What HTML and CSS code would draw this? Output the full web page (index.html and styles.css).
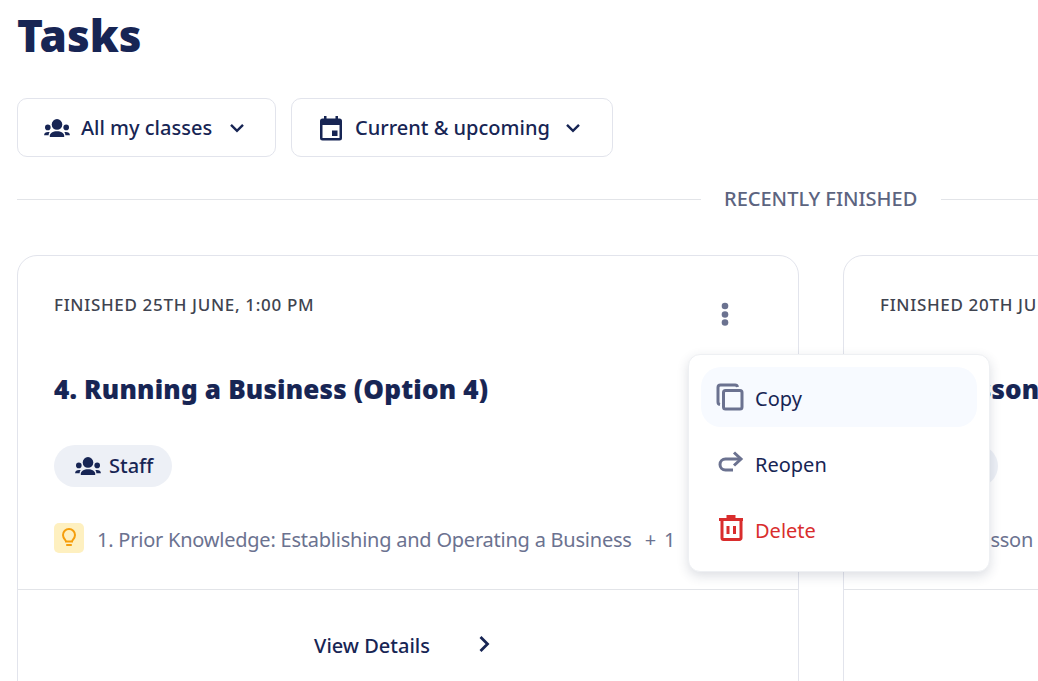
FILE: index.html
```html
<!DOCTYPE html>
<html lang="en">
<head>
<meta charset="utf-8">
<title>Tasks</title>
<link rel="stylesheet" href="styles.css">
</head>
<body>
<svg class="defs" width="0" height="0" aria-hidden="true">
  <symbol id="people" viewBox="0 0 26 18">
    <circle cx="13" cy="5.400" r="5.300"/>
    <circle cx="3.800" cy="8.400" r="2.800"/>
    <circle cx="22.200" cy="8.400" r="2.800"/>
    <path d="M5.800 18v-1.300c0-2.700 3.200-4.500 7.200-4.500s7.200 1.800 7.200 4.500V18z"/>
    <path d="M0.100 16.200c0-2 1.700-3.200 4-3.200.6 0 1.100.1 1.600.3-.7.700-1.100 1.700-1.100 2.900z"/>
    <path d="M25.900 16.200c0-2-1.700-3.200-4-3.200-.6 0-1.100.1-1.600.3.700.7 1.100 1.700 1.100 2.900z"/>
  </symbol>
</svg>
<main class="page">
  <h1 class="title">Tasks</h1>
  <div class="filters">
    <button class="filter filter-classes">
      <svg class="icon-people" width="26" height="18"><use href="#people"/></svg>
      <span>All my classes</span>
      <svg class="chev" width="16" height="10" viewBox="0 0 16 10"><path d="M2 1.800l6 6 6-6"/></svg>
    </button>
    <button class="filter filter-dates">
      <svg class="icon-cal" width="24" height="26" viewBox="0 0 24 26"><path d="M5 1h2.500v2.500h9V1H19v2.500h1.500A2.500 2.500 0 0 1 23 6v17a2.500 2.500 0 0 1-2.500 2.500h-17A2.500 2.500 0 0 1 1 23V6a2.500 2.500 0 0 1 2.500-2.500H5zM3.500 10v13h17V10zM13 15.500h5.500V21H13z" fill-rule="evenodd"/></svg>
      <span>Current &amp; upcoming</span>
      <svg class="chev" width="16" height="10" viewBox="0 0 16 10"><path d="M2 1.800l6 6 6-6"/></svg>
    </button>
  </div>
  <div class="divider"><span>RECENTLY FINISHED</span></div>
  <div class="cards">
    <article class="card card-main">
      <div class="card-body">
        <div class="card-top">
          <p class="finished">FINISHED 25TH JUNE, 1:00 PM</p>
          <svg class="dots" width="8" height="24" viewBox="0 0 8 24"><circle cx="4" cy="4" r="3.300"/><circle cx="4" cy="12.500" r="3.300"/><circle cx="4" cy="20.500" r="3.300"/></svg>
        </div>
        <h2 class="card-title">4. Running a Business (Option 4)</h2>
        <div class="pill">
          <svg class="icon-people" width="26" height="18"><use href="#people"/></svg>
          <span>Staff</span>
        </div>
        <div class="lesson">
          <span class="bulb">
            <svg width="16" height="20" viewBox="0 0 16 20"><path d="M5 13.500c0-1.500-3-3-3-6.500a6 6 0 0 1 12 0c0 3.500-3 5-3 6.500z"/><path d="M5.200 17h5.600"/></svg>
          </span>
          <span class="lesson-name">1. Prior Knowledge: Establishing and Operating a Business</span>
          <span class="lesson-more">+ 1</span>
        </div>
      </div>
      <div class="card-foot">
        <span>View Details</span>
        <svg class="chev-right" width="12" height="18" viewBox="0 0 12 18"><path d="M2.500 2l7 7-7 7"/></svg>
      </div>
    </article>
    <article class="card card-next">
      <div class="card-body">
        <div class="card-top">
          <p class="finished">FINISHED 20TH JUNE, 1:00 PM</p>
        </div>
        <h2 class="card-title">3. In Lesson</h2>
        <div class="pill">
          <svg class="icon-people" width="26" height="18"><use href="#people"/></svg>
          <span>Staff</span>
        </div>
        <div class="lesson">
          <span class="lesson-name">1. Starter Lesson</span>
        </div>
      </div>
      <div class="card-foot"></div>
    </article>
  </div>
  <div class="menu">
    <div class="menu-item is-hover">
      <svg class="menu-icon" width="28" height="28" viewBox="0 0 28 28"><path d="M4 21.500A2.500 2.500 0 0 1 2 19V4.500A2.500 2.500 0 0 1 4.500 2H19a2.500 2.500 0 0 1 2.500 2"/><rect x="7.500" y="7.500" width="18.500" height="18.500" rx="2"/></svg>
      <span>Copy</span>
    </div>
    <div class="menu-item">
      <svg class="menu-icon" width="28" height="28" viewBox="0 0 28 28"><path d="M25 10H9.500a5.500 5.500 0 0 0 0 11H17"/><path d="M18 3.500l7 6.500-7 6.500"/></svg>
      <span>Reopen</span>
    </div>
    <div class="menu-item is-danger">
      <svg class="menu-icon" width="28" height="28" viewBox="0 0 28 28"><path d="M3 4.500h24"/><path d="M10.500 1.500h9"/><path d="M6 4.500V23a1.500 1.500 0 0 0 1.500 1.500h16A1.500 1.500 0 0 0 25 23V4.500"/><path class="bars" d="M12 11v8M18.500 11v8"/></svg>
      <span>Delete</span>
    </div>
  </div>
</main>
</body>
</html>
```
FILE: styles.css
```css
* { box-sizing: border-box; }
html, body { margin: 0; height: 100%; overflow: hidden; background: #fff; }
body { font-family: "Noto Sans", sans-serif; color: #172554; }
.defs { position: absolute; }
.page { position: relative; height: 681px; overflow: hidden; padding: 8px 0 0 17px; }
.title { margin: 0; font-size: 44px; line-height: 54px; font-weight: 900; color: #172554; }
.filters { display: flex; gap: 15px; margin-top: 36px; }
.filter { display: flex; align-items: center; height: 59px; padding: 0 27px; background: #fff; border: 1px solid #e2e4ec; border-radius: 10px; font: 500 20px "Noto Sans", sans-serif; color: #172554; }
.filter-classes { width: 259px; padding-left: 26px; }
.filter-dates { width: 322px; }
.icon-people { fill: #172554; flex: none; }
.filter .icon-people { margin-right: 11px; }
.icon-cal { fill: #172554; margin-right: 12px; flex: none; }
.chev { fill: none; stroke: #172554; stroke-width: 2.400; margin-left: 17px; flex: none; }
.filter-dates .chev { margin-left: 15px; }
.divider { display: flex; align-items: center; margin-top: 29px; height: 26px; }
.divider::before, .divider::after { content: ""; height: 1px; background: #e2e4e8; flex: 1; }
.divider span { padding: 0 24px 0 23px; margin-top: -2px; font-size: 20px; font-weight: 500; color: #5c6480; flex: none; }
.divider::before { flex: none; width: 684px; }
.cards { display: flex; gap: 44px; margin-top: 43px; width: 1300px; }
.card { height: 460px; border: 1px solid #e2e4ec; border-radius: 20px; flex: none; }
.card-main { width: 782px; }
.card-next { width: 440px; }
.card-body { padding: 36px 36px 0; height: 334px; border-bottom: 1px solid #e2e4e8; }
.card-top { display: flex; justify-content: space-between; height: 62px; }
.finished { margin: 0; font-size: 17px; line-height: 26px; font-weight: 500; color: #3f4450; letter-spacing: 0.67px; white-space: nowrap; }
.dots { fill: #6b7290; margin: 10px 33px 0 0; }
.card-title { margin: 17px 0 0; font-size: 26px; line-height: 36px; font-weight: 900; color: #172554; letter-spacing: 0.19px; white-space: nowrap; -webkit-text-stroke: 0.12px #172554; }
.pill { display: inline-flex; align-items: center; gap: 8px; height: 42px; margin-top: 38px; padding: 0 19px 0 21px; border-radius: 21px; background: #edf0f6; font-size: 20px; font-weight: 500; }
.pill span { margin-top: -2px; }
.lesson { display: flex; align-items: center; margin-top: 36px; font-size: 20px; color: #6b7290; height: 30px; white-space: nowrap; letter-spacing: -0.23px; }
.lesson-name, .lesson-more { margin-top: 2px; }
.bulb { display: flex; align-items: center; justify-content: center; width: 30px; height: 30px; border-radius: 5px; background: #fef0c0; margin-right: 13px; }
.bulb svg { fill: none; stroke: #f59e0b; stroke-width: 2; }
.lesson-more { margin-left: 13px; word-spacing: 2px; letter-spacing: 0.3px; }
.card-foot { display: flex; align-items: center; justify-content: center; gap: 47px; height: 112px; padding: 0 12px 2px 0; font-size: 20px; font-weight: 500; }
.chev-right { fill: none; stroke: #172554; stroke-width: 2.800; margin: 0 0 2px 1px; }
.menu { position: absolute; left: 688px; top: 354px; width: 302px; height: 218px; padding: 12px; display: flex; flex-direction: column; gap: 6px; background: #fff; border: 1px solid #eef0f3; border-radius: 12px; box-shadow: 0 4px 12px rgba(40, 50, 80, .16); }
.menu-item { display: flex; align-items: center; gap: 11px; height: 60px; padding: 0 15px; border-radius: 20px; font-size: 20px; color: #172554; }
.menu-item span { margin-top: 2px; }
.menu-item.is-hover { background: #f7faff; }
.menu-icon { fill: none; stroke: #6b7290; stroke-width: 3; flex: none; overflow: visible; }
.is-danger { color: #d92d2d; }
.is-danger .menu-icon { stroke: #d92d2d; }
```
